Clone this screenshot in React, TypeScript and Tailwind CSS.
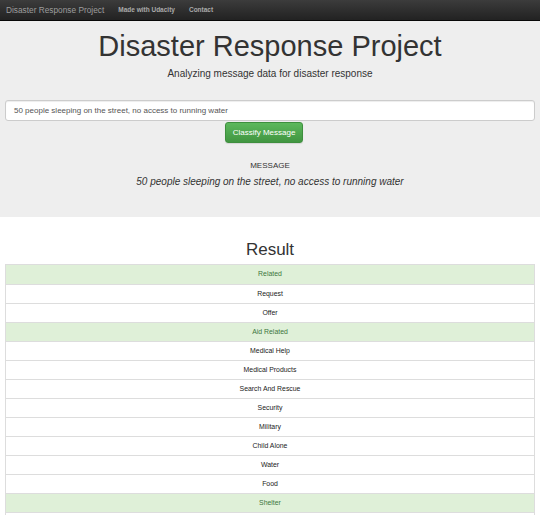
import React from "react";

const rows: { label: string; on: boolean }[] = [
  { label: "Related", on: true },
  { label: "Request", on: false },
  { label: "Offer", on: false },
  { label: "Aid Related", on: true },
  { label: "Medical Help", on: false },
  { label: "Medical Products", on: false },
  { label: "Search And Rescue", on: false },
  { label: "Security", on: false },
  { label: "Military", on: false },
  { label: "Child Alone", on: false },
  { label: "Water", on: false },
  { label: "Food", on: false },
  { label: "Shelter", on: true },
  { label: "Clothing", on: false },
];

export default function App() {
  const msg = "50 people sleeping on the street, no access to running water";
  return (
    <div className="min-h-[515px] bg-white text-[#333]" style={{ fontFamily: '"Liberation Sans", Arial, sans-serif' }}>
      <nav className="h-[21px] flex items-center bg-gradient-to-b from-[#3c3c3c] to-[#222222] border-b border-[#080808]">
        <span className="ml-[6px] text-[8.3px] text-[#9d9d9d]">Disaster Response Project</span>
        <span className="ml-[14px] text-[6.5px] font-bold text-[#aaaaaa]">Made with Udacity</span>
        <span className="ml-[14px] text-[6.5px] font-bold text-[#aaaaaa]">Contact</span>
      </nav>
      <section className="bg-[#eeeeee] pt-[9px] pb-[29px] px-[5px] flex flex-col items-center">
        <h1 className="text-[29px] leading-[32px] text-[#333]">Disaster Response Project</h1>
        <p className="mt-[5px] text-[10px] leading-[14px] text-[#333]">Analyzing message data for disaster response</p>
        <div className="mt-[19px] w-full h-[21px] bg-white border border-[#cccccc] rounded-[3px] flex items-center px-[8px] text-[8px] text-[#555] shadow-[inset_0_1px_1px_rgba(0,0,0,0.075)]">
          {msg}
        </div>
        <button className="mt-[1px] mr-[12px] h-[21px] w-[78px] rounded-[3px] border border-[#3e8f3e] bg-gradient-to-b from-[#5cb85c] to-[#419641] text-white text-[8px] shadow-[0_1px_1px_rgba(0,0,0,0.1)]">
          Classify Message
        </button>
        <div className="mt-[18px] text-[8px] leading-[10px] text-[#333]">MESSAGE</div>
        <div className="mt-[4px] text-[10px] leading-[13px] italic text-[#333]">{msg}</div>
      </section>
      <h2 className="mt-[23px] text-center text-[17px] leading-[20px] text-[#333]">Result</h2>
      <div className="mt-[4px] mx-[5px] border border-[#dddddd] overflow-hidden">
        {rows.map((r, i) => (
          <div
            key={r.label}
            className={`h-[19px] flex items-center justify-center text-[6.9px] ${i > 0 ? "border-t border-[#dddddd]" : ""} ${r.on ? "bg-[#dff0d8] text-[#3c763d]" : "bg-white text-[#222]"}`}
          >
            {r.label}
          </div>
        ))}
      </div>
    </div>
  );
}
